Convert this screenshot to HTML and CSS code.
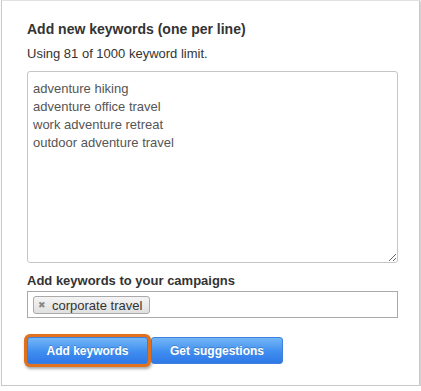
FILE: index.html
```html
<!DOCTYPE html>
<html lang="en">

<head>
    <meta charset="UTF-8">
    <meta name="viewport" content="width=device-width, initial-scale=1.0">
    <title>Add new keywords</title>
    <link rel="stylesheet" href="styles.css">
</head>

<body>
    <div class="panel">
        <h3 class="title">Add new keywords (one per line)</h3>
        <p class="usage">Using 81 of 1000 keyword limit.</p>
        <textarea class="keywords">adventure hiking
adventure office travel
work adventure retreat
outdoor adventure travel</textarea>
        <label class="label">Add keywords to your campaigns</label>
        <div class="campaigns">
            <span class="tag"><span class="tag-x">&#x2716;</span>corporate travel</span>
        </div>
        <div class="actions">
            <span class="focus-ring"><button class="btn">Add keywords</button></span>
            <button class="btn">Get suggestions</button>
        </div>
    </div>
</body>

</html>
```

FILE: styles.css
```css
body {
    margin: 0;
    padding: 0;
    background-color: white;
    font-family: "Liberation Sans", Arial, sans-serif;
    color: #333;
}

.panel {
    margin: 0 1px 0 1px;
    height: 386px;
    box-sizing: border-box;
    border: 1px solid #c9c9c9;
    border-top-color: #e2e2e2;
    box-shadow: 1px 1px 2px rgba(0, 0, 0, .25);
    padding: 19px 21px 0 25px;
    display: flex;
    flex-direction: column;
}

.title {
    margin: 0;
    font-size: 14px;
    line-height: 18px;
    font-weight: bold;
}

.usage {
    margin: 8px 0 0;
    font-size: 13px;
    line-height: 16px;
}

.keywords {
    margin: 9px 0 0;
    height: 192px;
    box-sizing: border-box;
    border: 1px solid #c6c6c6;
    border-radius: 3px;
    padding: 8px 5px;
    font-family: "Liberation Sans", Arial, sans-serif;
    font-size: 13px;
    line-height: 18px;
    color: #555;
    resize: both;
}

.label {
    margin-top: 10px;
    font-size: 13px;
    line-height: 16px;
    font-weight: bold;
}

.campaigns {
    margin-top: 2px;
    height: 27px;
    box-sizing: border-box;
    border: 1px solid #aaa;
    padding: 4px 5px;
    display: flex;
    align-items: flex-start;
}

.tag {
    display: inline-flex;
    align-items: center;
    height: 18px;
    box-sizing: border-box;
    padding: 0 7px 0 4px;
    border: 1px solid #aaa;
    border-radius: 3px;
    background: linear-gradient(#f4f4f4, #e0e0e0);
    font-size: 13px;
    color: #333;
}

.tag-x {
    font-size: 9px;
    color: #888;
    margin-right: 6px;
}

.actions {
    margin-top: 19px;
    display: flex;
    align-items: center;
    gap: 4px;
}

.focus-ring {
    display: flex;
    margin: -4px -4px -4px -3px;
    padding: 3px;
    border-radius: 6px;
    background-color: #e2711d;
    box-shadow: 1px 2px 3px rgba(0, 0, 0, .35);
}

.btn {
    height: 27px;
    padding: 0;
    border: 1px solid #3c7fdc;
    border-radius: 3px;
    background: linear-gradient(#74b6f7, #3f8ef0 55%, #2f78e6);
    color: white;
    font-family: "Liberation Sans", Arial, sans-serif;
    font-size: 12px;
    font-weight: bold;
    text-shadow: 0 -1px 0 rgba(0, 0, 0, .2);
}

.focus-ring .btn {
    width: 121px;
}

.focus-ring + .btn {
    width: 132px;
}
```
